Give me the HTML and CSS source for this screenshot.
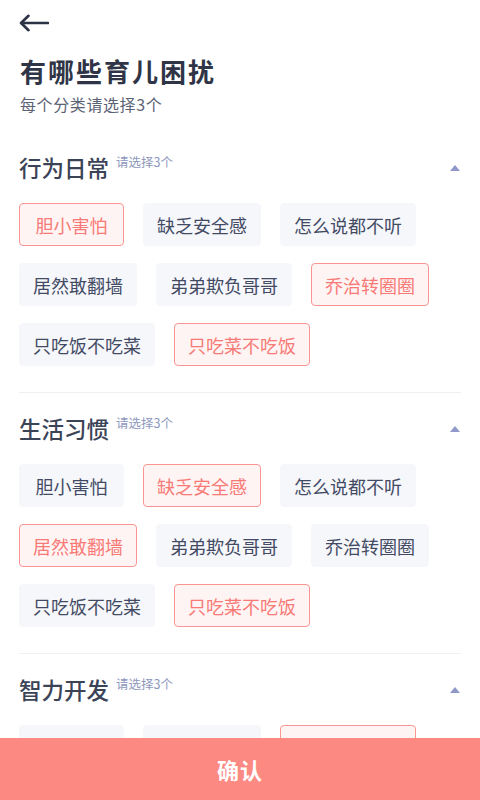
FILE: index.html
```html
<!DOCTYPE html>
<html lang="zh">
<head>
<meta charset="utf-8">
<title>有哪些育儿困扰</title>
<link rel="stylesheet" href="styles.css">
</head>
<body>
<div class="app">
  <div class="scroll">
    <div class="page">
      <div class="topbar">
        <svg class="back" width="30" height="18" viewBox="0 0 30 18"><path d="M29 9H2.5M9.5 1.8L2 9l7.5 7.2" fill="none" stroke="#2c3345" stroke-width="2.6" stroke-linecap="round" stroke-linejoin="round"/></svg>
      </div>
      <h1 class="title">有哪些育儿困扰</h1>
      <p class="subtitle">每个分类请选择3个</p>

      <section class="group">
        <div class="group-head">
          <h2 class="group-name">行为日常</h2><span class="hint">请选择3个</span>
          <span class="caret"></span>
        </div>
        <div class="tags">
          <span class="tag on">胆小害怕</span>
          <span class="tag">缺乏安全感</span>
          <span class="tag">怎么说都不听</span>
          <span class="tag">居然敢翻墙</span>
          <span class="tag">弟弟欺负哥哥</span>
          <span class="tag on">乔治转圈圈</span>
          <span class="tag">只吃饭不吃菜</span>
          <span class="tag on">只吃菜不吃饭</span>
        </div>
      </section>

      <section class="group">
        <div class="group-head">
          <h2 class="group-name">生活习惯</h2><span class="hint">请选择3个</span>
          <span class="caret"></span>
        </div>
        <div class="tags">
          <span class="tag">胆小害怕</span>
          <span class="tag on">缺乏安全感</span>
          <span class="tag">怎么说都不听</span>
          <span class="tag on">居然敢翻墙</span>
          <span class="tag">弟弟欺负哥哥</span>
          <span class="tag">乔治转圈圈</span>
          <span class="tag">只吃饭不吃菜</span>
          <span class="tag on">只吃菜不吃饭</span>
        </div>
      </section>

      <section class="group">
        <div class="group-head">
          <h2 class="group-name">智力开发</h2><span class="hint">请选择3个</span>
          <span class="caret"></span>
        </div>
        <div class="tags">
          <span class="tag">胆小害怕</span>
          <span class="tag">缺乏安全感</span>
          <span class="tag on">怎么说都不听</span>
        </div>
      </section>
    </div>
  </div>
  <button class="confirm">确认</button>
</div>
</body>
</html>
```
FILE: styles.css
```css
html, body {
  margin: 0;
  padding: 0;
  background: #ffffff;
}
body {
  font-family: "Noto Sans CJK SC", "Noto Sans", sans-serif;
  color: #333a4d;
}
.app {
  height: 100vh;
  display: flex;
  flex-direction: column;
  overflow: hidden;
}
.scroll {
  flex: 1;
  min-height: 0;
  overflow: hidden;
}
.page {
  padding: 0 19px;
}
.topbar {
  height: 44px;
  display: flex;
  align-items: center;
}
.back {
  display: block;
  margin-top: 1px;
}
.title {
  margin: 9px 0 0 1px;
  font-size: 26px;
  line-height: 36px;
  font-weight: 700;
  letter-spacing: 2px;
  color: #2f3546;
}
.subtitle {
  margin: 4px 0 0 1px;
  font-size: 16px;
  line-height: 22px;
  letter-spacing: 0.6px;
  color: #5b6275;
}
.group {
  padding: 20px 0 26px 0;
  border-bottom: 1px solid #eef0f4;
}
.group:first-of-type {
  padding-top: 37px;
}
.group-head {
  display: flex;
  align-items: flex-start;
  height: 30px;
}
.group-name {
  margin: 0;
  font-size: 22.5px;
  line-height: 30px;
  font-weight: 500;
  color: #3b4357;
}
.hint {
  margin-left: 7px;
  margin-top: 2px;
  font-size: 12.5px;
  line-height: 16px;
  color: #8e98bd;
}
.caret {
  margin-left: auto;
  margin-right: 1px;
  margin-top: 13px;
  width: 0;
  height: 0;
  border-left: 5.5px solid transparent;
  border-right: 5.5px solid transparent;
  border-bottom: 6px solid #8f99c9;
}
.tags {
  margin-top: 21px;
  display: flex;
  flex-wrap: wrap;
  gap: 17px 19px;
}
.tag {
  box-sizing: border-box;
  height: 43px;
  min-width: 105px;
  padding: 0 13px;
  display: flex;
  align-items: center;
  justify-content: center;
  font-size: 18px;
  color: #434b64;
  background: #f6f7fb;
  border: 1px solid #f6f7fb;
  border-radius: 4px;
}
.tag.on {
  color: #f77a76;
  background: #fff4f4;
  border-color: #f99593;
}
.confirm {
  flex: none;
  height: 62px;
  width: 100%;
  border: 0;
  margin: 0;
  padding: 0;
  background: #fd8983;
  color: #ffffff;
  font-family: "Noto Sans CJK SC", "Noto Sans", sans-serif;
  font-size: 22px;
  font-weight: 700;
  letter-spacing: 1px;
}
```
